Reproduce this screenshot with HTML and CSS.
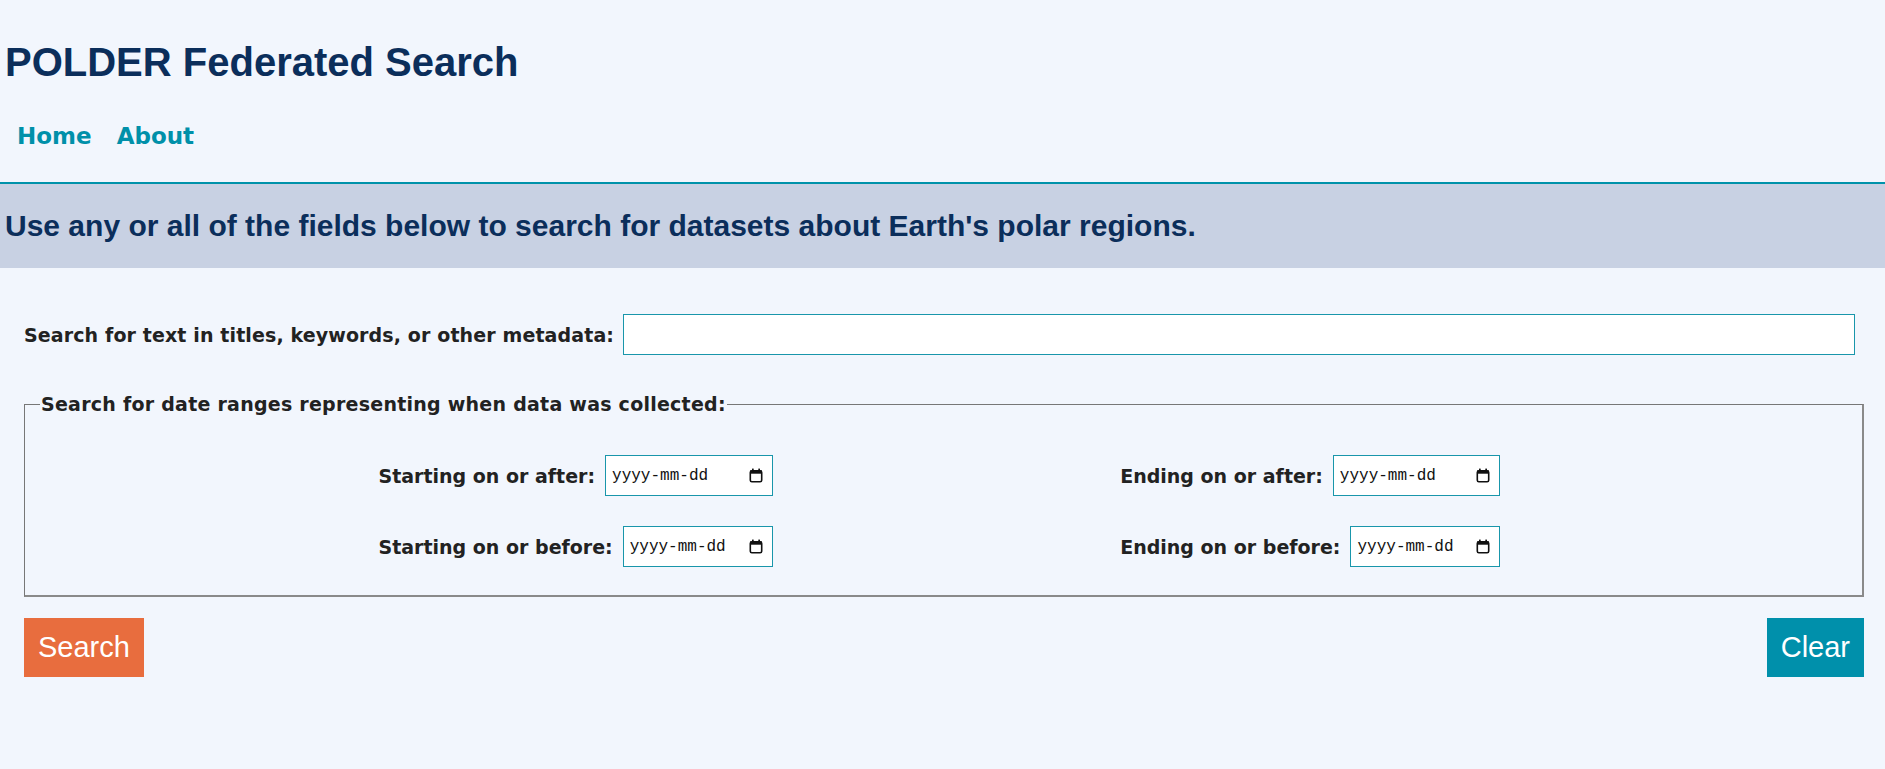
FILE: index.html
```html
<!DOCTYPE html>
<html lang="en">
<head>
<meta charset="utf-8">
<title>POLDER Federated Search</title>
<link rel="stylesheet" href="styles.css">
</head>
<body>
<header class="site-header">
  <h1 class="site-title">POLDER Federated Search</h1>
  <nav>
    <ul class="nav">
      <li><a class="nav-link" href="#">Home</a></li>
      <li><a class="nav-link" href="#">About</a></li>
    </ul>
  </nav>
</header>
<section class="banner">
  <h2 class="banner-text">Use any or all of the fields below to search for datasets about Earth's polar regions.</h2>
</section>
<form class="search-form">
  <div class="text-row">
    <label class="label label-text" for="q">Search for text in titles, keywords, or other metadata:</label>
    <input class="text-input" id="q" type="text">
  </div>
  <fieldset class="dates">
    <legend class="label legend">Search for date ranges representing when data was collected:</legend>
    <div class="date-cols">
      <div class="date-col">
        <div class="date-row">
          <label class="label" for="sa">Starting on or after:</label>
          <div class="date-field">
            <input class="date-input" id="sa" type="text" placeholder="yyyy-mm-dd">
            <svg class="cal-icon" width="14" height="15" viewBox="0 0 14 15" aria-hidden="true"><rect x="1.3" y="2.8" width="11.4" height="11" rx="1.6" fill="none" stroke="#111" stroke-width="1.6"/><rect x="1" y="2.5" width="12" height="3.2" fill="#111"/><rect x="3" y="0.6" width="1.7" height="3" fill="#111"/><rect x="9.3" y="0.6" width="1.7" height="3" fill="#111"/></svg>
          </div>
        </div>
        <div class="date-row">
          <label class="label" for="sb">Starting on or before:</label>
          <div class="date-field">
            <input class="date-input" id="sb" type="text" placeholder="yyyy-mm-dd">
            <svg class="cal-icon" width="14" height="15" viewBox="0 0 14 15" aria-hidden="true"><rect x="1.3" y="2.8" width="11.4" height="11" rx="1.6" fill="none" stroke="#111" stroke-width="1.6"/><rect x="1" y="2.5" width="12" height="3.2" fill="#111"/><rect x="3" y="0.6" width="1.7" height="3" fill="#111"/><rect x="9.3" y="0.6" width="1.7" height="3" fill="#111"/></svg>
          </div>
        </div>
      </div>
      <div class="date-col">
        <div class="date-row">
          <label class="label" for="ea">Ending on or after:</label>
          <div class="date-field">
            <input class="date-input" id="ea" type="text" placeholder="yyyy-mm-dd">
            <svg class="cal-icon" width="14" height="15" viewBox="0 0 14 15" aria-hidden="true"><rect x="1.3" y="2.8" width="11.4" height="11" rx="1.6" fill="none" stroke="#111" stroke-width="1.6"/><rect x="1" y="2.5" width="12" height="3.2" fill="#111"/><rect x="3" y="0.6" width="1.7" height="3" fill="#111"/><rect x="9.3" y="0.6" width="1.7" height="3" fill="#111"/></svg>
          </div>
        </div>
        <div class="date-row">
          <label class="label" for="eb">Ending on or before:</label>
          <div class="date-field">
            <input class="date-input" id="eb" type="text" placeholder="yyyy-mm-dd">
            <svg class="cal-icon" width="14" height="15" viewBox="0 0 14 15" aria-hidden="true"><rect x="1.3" y="2.8" width="11.4" height="11" rx="1.6" fill="none" stroke="#111" stroke-width="1.6"/><rect x="1" y="2.5" width="12" height="3.2" fill="#111"/><rect x="3" y="0.6" width="1.7" height="3" fill="#111"/><rect x="9.3" y="0.6" width="1.7" height="3" fill="#111"/></svg>
          </div>
        </div>
      </div>
    </div>
  </fieldset>
  <div class="actions">
    <button class="btn btn-search" type="submit">Search</button>
    <button class="btn btn-clear" type="reset">Clear</button>
  </div>
</form>
</body>
</html>
```

FILE: styles.css
```css
html, body {
  margin: 0;
  padding: 0;
}

body {
  background: #f2f6fd;
  font-family: "Liberation Sans", Arial, sans-serif;
  color: #222;
  min-height: 769px;
}

.site-header {
  padding: 39px 5px 0;
}

.site-title {
  margin: 0;
  font-size: 40px;
  line-height: 46px;
  font-weight: bold;
  color: #0b2e5b;
}

.nav {
  list-style: none;
  display: flex;
  margin: 38px 0 0;
  padding: 0 0 33px 0;
}

.nav-link {
  display: block;
  padding: 0 13px 0 12px;
  font-family: "DejaVu Sans", sans-serif;
  font-weight: bold;
  font-size: 23px;
  line-height: 26px;
  color: #0090a9;
  text-decoration: none;
}

.banner {
  background: #c8d1e3;
  border-top: 2px solid #0092aa;
  padding: 25px 5px;
}

.banner-text {
  margin: 0;
  font-size: 30px;
  line-height: 34px;
  font-weight: bold;
  color: #0b2e5b;
}

.search-form {
  padding: 46px 21px 40px 24px;
}

.label {
  font-family: "DejaVu Sans", sans-serif;
  font-weight: bold;
  font-size: 19px;
  line-height: 22px;
  color: #222;
  white-space: nowrap;
}

.label-text {
  letter-spacing: 0.12px;
}

.text-row {
  display: flex;
  align-items: center;
  gap: 9px;
  padding-right: 9px;
}

.text-input {
  flex: 1;
  height: 41px;
  box-sizing: border-box;
  border: 1px solid #1996ab;
  background: #fff;
  border-radius: 0;
  font-size: 16px;
  padding: 0 6px;
  margin: 0;
}

.dates {
  margin: 38px 0 0;
  padding: 40px 14px 28px 6px;
  border-color: #777;
  border-style: solid;
  border-width: 1px 2px 2px 1px;
  border-right-color: #8a8a8a;
  border-bottom-color: #8a8a8a;
}

.legend {
  padding: 0 1px;
  margin-left: 9px;
  letter-spacing: 0.25px;
}

.date-cols {
  display: flex;
  justify-content: space-evenly;
}

.date-col {
  display: flex;
  flex-direction: column;
  gap: 30px;
}

.date-row {
  display: flex;
  align-items: center;
  gap: 10px;
}

.date-field {
  flex: 1 0 150px;
  width: 150px;
  height: 41px;
  box-sizing: border-box;
  display: flex;
  align-items: center;
  border: 1px solid #1996ab;
  background: #fff;
  padding: 0 9px 0 6px;
}

.date-input {
  flex: 1;
  min-width: 0;
  border: 0;
  outline: none;
  background: transparent;
  padding: 0;
  margin: 0;
  font-family: "Liberation Mono", "DejaVu Sans Mono", monospace;
  font-size: 16px;
  color: #111;
}

.date-input::placeholder {
  color: #111;
  opacity: 1;
}

.cal-icon {
  flex: none;
  display: block;
}

.actions {
  display: flex;
  justify-content: space-between;
  margin-top: 21px;
}

.btn {
  border: 0;
  border-radius: 0;
  margin: 0;
  padding: 13px 14px;
  font-family: "Liberation Sans", Arial, sans-serif;
  font-size: 29px;
  line-height: 33px;
  color: #fff;
  cursor: pointer;
}

.btn-search {
  background: #e86d3e;
}

.btn-clear {
  background: #0090ab;
}
```
